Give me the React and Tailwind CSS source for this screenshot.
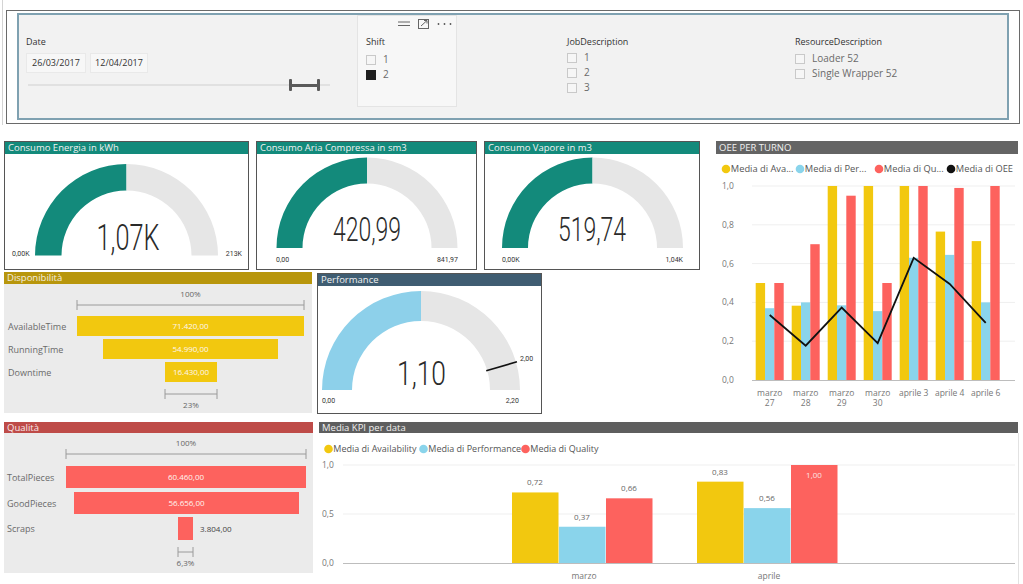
import React from "react";

const YEL = "#f2c80f";
const BLU = "#8ad4eb";
const RED = "#fd625e";
const TEAL = "#138a7b";

// point on a half gauge, t = 0 (left) .. 1 (right)
function pt(cx, cy, r, t) {
  const a = Math.PI * (1 - t);
  return [cx + r * Math.cos(a), cy - r * Math.sin(a)];
}

function arc(cx, cy, R, r, t0, t1) {
  const [x0, y0] = pt(cx, cy, R, t0);
  const [x1, y1] = pt(cx, cy, R, t1);
  const [x2, y2] = pt(cx, cy, r, t1);
  const [x3, y3] = pt(cx, cy, r, t0);
  return `M${x0} ${y0}A${R} ${R} 0 0 1 ${x1} ${y1}L${x2} ${y2}A${r} ${r} 0 0 0 ${x3} ${y3}Z`;
}

const Gauge = ({ cx, cy, R, r, frac, color }) => (
  <>
    <path d={arc(cx, cy, R, r, 0, frac)} fill={color} />
    <path d={arc(cx, cy, R, r, frac, 1)} fill="#e6e6e6" />
  </>
);

const BigValue = ({ x, y, w, size, children }) => (
  <text
    x={x}
    y={y}
    textAnchor="middle"
    fontSize={size}
    textLength={w}
    lengthAdjust="spacingAndGlyphs"
    fill="#2a2a2a"
    className="font-['Roboto',sans-serif] font-light"
  >
    {children}
  </text>
);

const Small = ({ x, y, anchor = "start", children }) => (
  <text x={x} y={y} textAnchor={anchor} fontSize="7" fill="#333" className="font-['Roboto',sans-serif]">
    {children}
  </text>
);

const Card = ({ className, head, title, children }) => (
  <div className={`border border-[#555] bg-white flex flex-col overflow-hidden ${className}`}>
    <div className={`h-[12px] shrink-0 ${head} text-[9.5px] leading-[12px] text-[#f1f1f1] pl-[3px] whitespace-nowrap`}>
      {title}
    </div>
    {children}
  </div>
);

const Check = ({ label, on }) => (
  <div className="flex items-center h-[15px]">
    <div className={on ? "w-[10px] h-[10px] bg-[#1f1f1f]" : "w-[10px] h-[10px] border border-[#c9c9c9] bg-[#f6f6f6]"} />
    <span className="ml-[7px] text-[10px] text-[#6a6a6a] leading-[15px]">{label}</span>
  </div>
);

const oee = [
  { l: ["marzo", "27"], a: 0.5, p: 0.37, q: 0.5, o: 0.335 },
  { l: ["marzo", "28"], a: 0.383, p: 0.4, q: 0.7, o: 0.177 },
  { l: ["marzo", "29"], a: 1, p: 0.385, q: 0.95, o: 0.373 },
  { l: ["marzo", "30"], a: 1, p: 0.355, q: 0.5, o: 0.19 },
  { l: ["aprile 3"], a: 1, p: 0.63, q: 1, o: 0.63 },
  { l: ["aprile 4"], a: 0.765, p: 0.645, q: 0.99, o: 0.495 },
  { l: ["aprile 6"], a: 0.716, p: 0.4, q: 1, o: 0.295 },
];

const kpi = [
  { l: "marzo", x: 512, v: [0.72, 0.37, 0.66], t: ["0,72", "0,37", "0,66"] },
  { l: "aprile", x: 697, v: [0.83, 0.56, 1.0], t: ["0,83", "0,56", "1,00"] },
];

const Legend = ({ items, y, size = 9 }) =>
  items.map(([cx, color, label]) => (
    <g key={label}>
      <circle cx={cx} cy={y} r="4.3" fill={color} />
      <text x={cx + 4.8} y={y + 3.3} fontSize={size} fill="#555">
        {label}
      </text>
    </g>
  ));

const OeeChart = () => {
  const y = (v) => 380 - v * 194;
  const line = oee.map((d, i) => `${755.7 + i * 36 + 14} ${y(d.o)}`).join(" L");
  return (
    <svg width="302" height="257" viewBox="716 154 302 257">
      <Legend
        y={169}
        size={9.3}
        items={[
          [726, YEL, "Media di Ava..."],
          [800, BLU, "Media di Per..."],
          [879, RED, "Media di Qu..."],
          [951, "#111", "Media di OEE"],
        ]}
      />
      {[1, 0.8, 0.6, 0.4, 0.2].map((v) => (
        <line key={v} x1="752" x2="1015" y1={y(v)} y2={y(v)} stroke="#efefef" />
      ))}
      {["1,0", "0,8", "0,6", "0,4", "0,2", "0,0"].map((t, i) => (
        <text key={t} x="722" y={y(1 - i * 0.2) + 3} fontSize="8.5" fill="#777">
          {t}
        </text>
      ))}
      {oee.map((d, i) => {
        const x = 755.7 + i * 36;
        return (
          <g key={i}>
            <rect x={x} y={y(d.a)} width="9.4" height={d.a * 194} fill={YEL} />
            <rect x={x + 9.3} y={y(d.p)} width="9.4" height={d.p * 194} fill={BLU} />
            <rect x={x + 18.6} y={y(d.q)} width="9.4" height={d.q * 194} fill={RED} />
            {d.l.map((t, j) => (
              <text key={t} x={x + 14} y={396 + j * 10} textAnchor="middle" fontSize="8.5" fill="#777">
                {t}
              </text>
            ))}
          </g>
        );
      })}
      <line x1="752" x2="1015" y1="380.5" y2="380.5" stroke="#bdbdbd" />
      <path d={`M${line}`} fill="none" stroke="#111" strokeWidth="1.8" />
    </svg>
  );
};

const KpiChart = () => {
  const y = (v) => 563 - v * 98;
  const colors = [YEL, BLU, RED];
  return (
    <svg width="699" height="151" viewBox="319 433 699 151">
      <Legend
        y={449}
        items={[
          [328.5, YEL, "Media di Availability"],
          [423.5, BLU, "Media di Performance"],
          [525.5, RED, "Media di Quality"],
        ]}
      />
      <line x1="343" x2="1015" y1="465" y2="465" stroke="#efefef" />
      <line x1="343" x2="1015" y1="514" y2="514" stroke="#efefef" />
      {["1,0", "0,5", "0,0"].map((t, i) => (
        <text key={t} x="322" y={468 + i * 49} fontSize="8.5" fill="#777">
          {t}
        </text>
      ))}
      {kpi.map((g) => (
        <g key={g.l}>
          {g.v.map((v, j) => {
            const x = g.x + j * 47;
            const inside = v > 0.95;
            return (
              <g key={j}>
                <rect x={x} y={y(v)} width="46.5" height={v * 98} fill={colors[j]} />
                <text
                  x={x + 23}
                  y={inside ? y(v) + 13 : y(v) - 7}
                  textAnchor="middle"
                  fontSize="8"
                  fill={inside ? "#fbe4e3" : "#666"}
                >
                  {g.t[j]}
                </text>
              </g>
            );
          })}
          <text x={g.x + 72} y="579" textAnchor="middle" fontSize="8.5" fill="#777">
            {g.l}
          </text>
        </g>
      ))}
      <line x1="343" x2="1015" y1="563.5" y2="563.5" stroke="#bdbdbd" />
    </svg>
  );
};

const Bracket = ({ x1, x2, y }) => (
  <g stroke="#9a9a9a" strokeWidth="1">
    <line x1={x1} x2={x2} y1={y} y2={y} />
    <line x1={x1} x2={x1} y1={y - 5} y2={y + 5} />
    <line x1={x2} x2={x2} y1={y - 5} y2={y + 5} />
  </g>
);

const Funnel = ({ viewBox, w, h, color, top, bottom, rows, label }) => (
  <svg width={w} height={h} viewBox={viewBox}>
    <text x={top.cx} y={top.y - 8} textAnchor="middle" fontSize="8" fill="#666">
      100%
    </text>
    <Bracket x1={top.x1} x2={top.x2} y={top.y} />
    {rows.map((r) => (
      <g key={r.name}>
        <text x={r.lx} y={r.y + r.h / 2 + 3.5} fontSize="9" fill="#6a6a6a">
          {r.name}
        </text>
        <rect x={r.x1} y={r.y} width={r.x2 - r.x1} height={r.h} fill={color} />
        {r.out ? (
          <text x={r.x2 + 7} y={r.y + r.h / 2 + 3} fontSize="8" fill="#444">
            {r.value}
          </text>
        ) : (
          <text x={(r.x1 + r.x2) / 2} y={r.y + r.h / 2 + 3} textAnchor="middle" fontSize="8" fill="#fdf6f0">
            {r.value}
          </text>
        )}
      </g>
    ))}
    <Bracket x1={bottom.x1} x2={bottom.x2} y={bottom.y} />
    <text x={(bottom.x1 + bottom.x2) / 2} y={bottom.y + 14} textAnchor="middle" fontSize="8" fill="#666">
      {label}
    </text>
  </svg>
);

export default function App() {
  return (
    <div className="w-[1023px] h-[584px] bg-white overflow-hidden font-['Segoe_UI','Open_Sans',sans-serif]">
      {/* filters */}
      <div className="flex h-[124px]">
        <div className="ml-[2px] w-px h-[125px] bg-[#d4d4d4]" />
        <div className="ml-[3px] mt-[10px] w-[1014px] h-[114px] border border-[#6a6a6a] bg-white pt-[2px] pb-[3px] px-[10px]">
          <div className="h-full border-2 border-[#7fa1b1] bg-[#f2f2f2] flex items-start">
            <div className="w-[338px] pl-[7px] pt-[21px]">
              <div className="text-[9px] leading-[12px] text-[#333]">Date</div>
              <div className="mt-[5px] flex gap-[4px]">
                <div className="w-[60px] h-[20px] bg-[#f7f7f7] border border-[#e9e9e9] text-[9px] leading-[18px] text-[#333] text-center">
                  26/03/2017
                </div>
                <div className="w-[58px] h-[20px] bg-[#f7f7f7] border border-[#e9e9e9] text-[9px] leading-[18px] text-[#333] text-center">
                  12/04/2017
                </div>
              </div>
              <div className="mt-[6px] ml-[2px] w-[302px] h-[12px] relative">
                <div className="absolute left-0 right-0 top-[5px] h-[2px] bg-[#e1e1e1]" />
                <div className="absolute left-[261px] top-0 w-[3px] h-[12px] bg-[#5a5a5a] rounded-[1px]" />
                <div className="absolute left-[263px] top-[5px] w-[26px] h-[2.5px] bg-[#5a5a5a]" />
                <div className="absolute left-[289px] top-0 w-[3px] h-[12px] bg-[#5a5a5a] rounded-[1px]" />
              </div>
            </div>

            <div className="w-[100px] h-[92px] bg-[#f7f7f7] border border-[#e4e4e4]">
              <div className="flex justify-end items-center gap-[8px] pr-[4px] pt-[3px] h-[13px]">
                <svg width="12" height="6" viewBox="0 0 12 6">
                  <line x1="0" x2="12" y1="1" y2="1" stroke="#666" />
                  <line x1="0" x2="12" y1="4.5" y2="4.5" stroke="#666" />
                </svg>
                <svg width="11" height="10" viewBox="0 0 11 10">
                  <rect x="0.5" y="0.5" width="10" height="9" fill="none" stroke="#666" />
                  <path d="M3 7 L9 1.5 M6 1.5 H9 V4.5" fill="none" stroke="#666" />
                </svg>
                <svg width="15" height="4" viewBox="0 0 15 4">
                  <circle cx="1.5" cy="2" r="0.9" fill="#555" />
                  <circle cx="7.5" cy="2" r="0.9" fill="#555" />
                  <circle cx="13.5" cy="2" r="0.9" fill="#555" />
                </svg>
              </div>
              <div className="pl-[8px] pt-[7px]">
                <div className="text-[9px] leading-[12px] text-[#333]">Shift</div>
                <div className="mt-[4px]">
                  <Check label="1" />
                  <Check label="2" on />
                </div>
              </div>
            </div>

            <div className="ml-[110px] w-[228px] pt-[21px]">
              <div className="text-[9px] leading-[12px] text-[#333]">JobDescription</div>
              <div className="mt-[2px]">
                <Check label="1" />
                <Check label="2" />
                <Check label="3" />
              </div>
            </div>

            <div className="pt-[21px]">
              <div className="text-[9px] leading-[12px] text-[#333]">ResourceDescription</div>
              <div className="mt-[3px]">
                <Check label="Loader 52" />
                <Check label="Single Wrapper 52" />
              </div>
            </div>
          </div>
        </div>
      </div>

      {/* gauges, funnel, performance, OEE */}
      <div className="flex mt-[17px] h-[273px]">
        <div className="ml-[4px] w-[696px] flex flex-col">
          <div className="flex gap-[7px] h-[129px]">
            <Card className="w-[245px] h-[129px]" head="bg-[#138a7b]" title="Consumo Energia in kWh">
              <svg width="243" height="115" viewBox="5 154 243 115">
                <Gauge cx={126.5} cy={255.5} R={91.5} r={65} frac={0.5} color={TEAL} />
                <BigValue x={128} y={250} w={63} size={36}>1,07K</BigValue>
                <Small x={12} y={256}>0,00K</Small>
                <Small x={242} y={256} anchor="end">213K</Small>
              </svg>
            </Card>
            <Card className="w-[221px] h-[129px]" head="bg-[#138a7b]" title="Consumo Aria Compressa in sm3">
              <svg width="219" height="115" viewBox="257 154 219 115">
                <Gauge cx={367} cy={248} R={90.5} r={64.5} frac={0.5} color={TEAL} />
                <BigValue x={367} y={241} w={68} size={34}>420,99</BigValue>
                <Small x={276} y={262}>0,00</Small>
                <Small x={458} y={262} anchor="end">841,97</Small>
              </svg>
            </Card>
            <Card className="w-[216px] h-[129px]" head="bg-[#138a7b]" title="Consumo Vapore in m3">
              <svg width="214" height="115" viewBox="485 154 214 115">
                <Gauge cx={592.5} cy={248} R={90.5} r={64.5} frac={0.5} color={TEAL} />
                <BigValue x={592} y={241} w={68} size={34}>519,74</BigValue>
                <Small x={502} y={262}>0,00K</Small>
                <Small x={683} y={262} anchor="end">1,04K</Small>
              </svg>
            </Card>
          </div>

          <div className="flex mt-[2px]">
            <div className="w-[308px] h-[141px] bg-[#ebebeb] flex flex-col">
              <div className="h-[12px] bg-[#b8960c] text-[9.5px] leading-[12px] text-[#f4efe0] pl-[3px]">Disponibilità</div>
              <Funnel
                viewBox="4 284 308 129"
                w={308}
                h={129}
                color={YEL}
                top={{ cx: 190.5, x1: 77, x2: 304, y: 305 }}
                bottom={{ x1: 165, x2: 217, y: 394 }}
                label="23%"
                rows={[
                  { name: "AvailableTime", lx: 8, x1: 77, x2: 304, y: 316, h: 20, value: "71.420,00" },
                  { name: "RunningTime", lx: 8, x1: 103, x2: 278, y: 339, h: 20, value: "54.990,00" },
                  { name: "Downtime", lx: 8, x1: 165, x2: 217, y: 362, h: 20, value: "16.430,00" },
                ]}
              />
            </div>
            <Card className="ml-[5px] mt-[1px] w-[225px] h-[141px]" head="bg-[#3f5d72]" title="Performance">
              <svg width="223" height="127" viewBox="318 286 223 127">
                <Gauge cx={421} cy={390} R={99} r={69} frac={0.5} color="#8dd0ea" />
                <line
                  x1={pt(421, 390, 68, 2 / 2.2)[0]}
                  y1={pt(421, 390, 68, 2 / 2.2)[1]}
                  x2={pt(421, 390, 100, 2 / 2.2)[0]}
                  y2={pt(421, 390, 100, 2 / 2.2)[1]}
                  stroke="#111"
                  strokeWidth="1.6"
                />
                <Small x={520} y={361}>2,00</Small>
                <BigValue x={421.5} y={385} w={49} size={34}>1,10</BigValue>
                <Small x={322} y={403}>0,00</Small>
                <Small x={519} y={403} anchor="end">2,20</Small>
              </svg>
            </Card>
          </div>
        </div>

        <div className="ml-[16px] w-[302px] h-[270px] flex flex-col overflow-hidden">
          <div className="h-[13px] shrink-0 bg-[#646464] text-[9.5px] leading-[13px] text-[#f0f0f0] pl-[3px]">OEE PER TURNO</div>
          <OeeChart />
        </div>
      </div>

      {/* quality funnel and KPI by date */}
      <div className="flex mt-[8px]">
        <div className="ml-[4px] w-[309px] h-[151px] bg-[#ebebeb] flex flex-col">
          <div className="h-[11px] bg-[#be4b48] text-[9.5px] leading-[11px] text-[#f8e8e8] pl-[3px]">Qualità</div>
          <Funnel
            viewBox="4 433 309 140"
            w={309}
            h={140}
            color={RED}
            top={{ cx: 186, x1: 66, x2: 306, y: 454 }}
            bottom={{ x1: 178, x2: 193, y: 552 }}
            label="6,3%"
            rows={[
              { name: "TotalPieces", lx: 7, x1: 66, x2: 306, y: 466, h: 22, value: "60.460,00" },
              { name: "GoodPieces", lx: 7, x1: 74, x2: 299, y: 492, h: 22, value: "56.656,00" },
              { name: "Scraps", lx: 7, x1: 178, x2: 193, y: 517, h: 23, value: "3.804,00", out: true },
            ]}
          />
        </div>
        <div className="ml-[6px] w-[700px] h-[162px] flex flex-col">
          <div className="h-[11px] w-[699px] bg-[#5e5e5e] text-[9.5px] leading-[11px] text-[#f0f0f0] pl-[3px]">Media KPI per data</div>
          <div className="border-r border-[#e2e2e2] w-[700px]">
            <KpiChart />
          </div>
        </div>
      </div>
    </div>
  );
}
